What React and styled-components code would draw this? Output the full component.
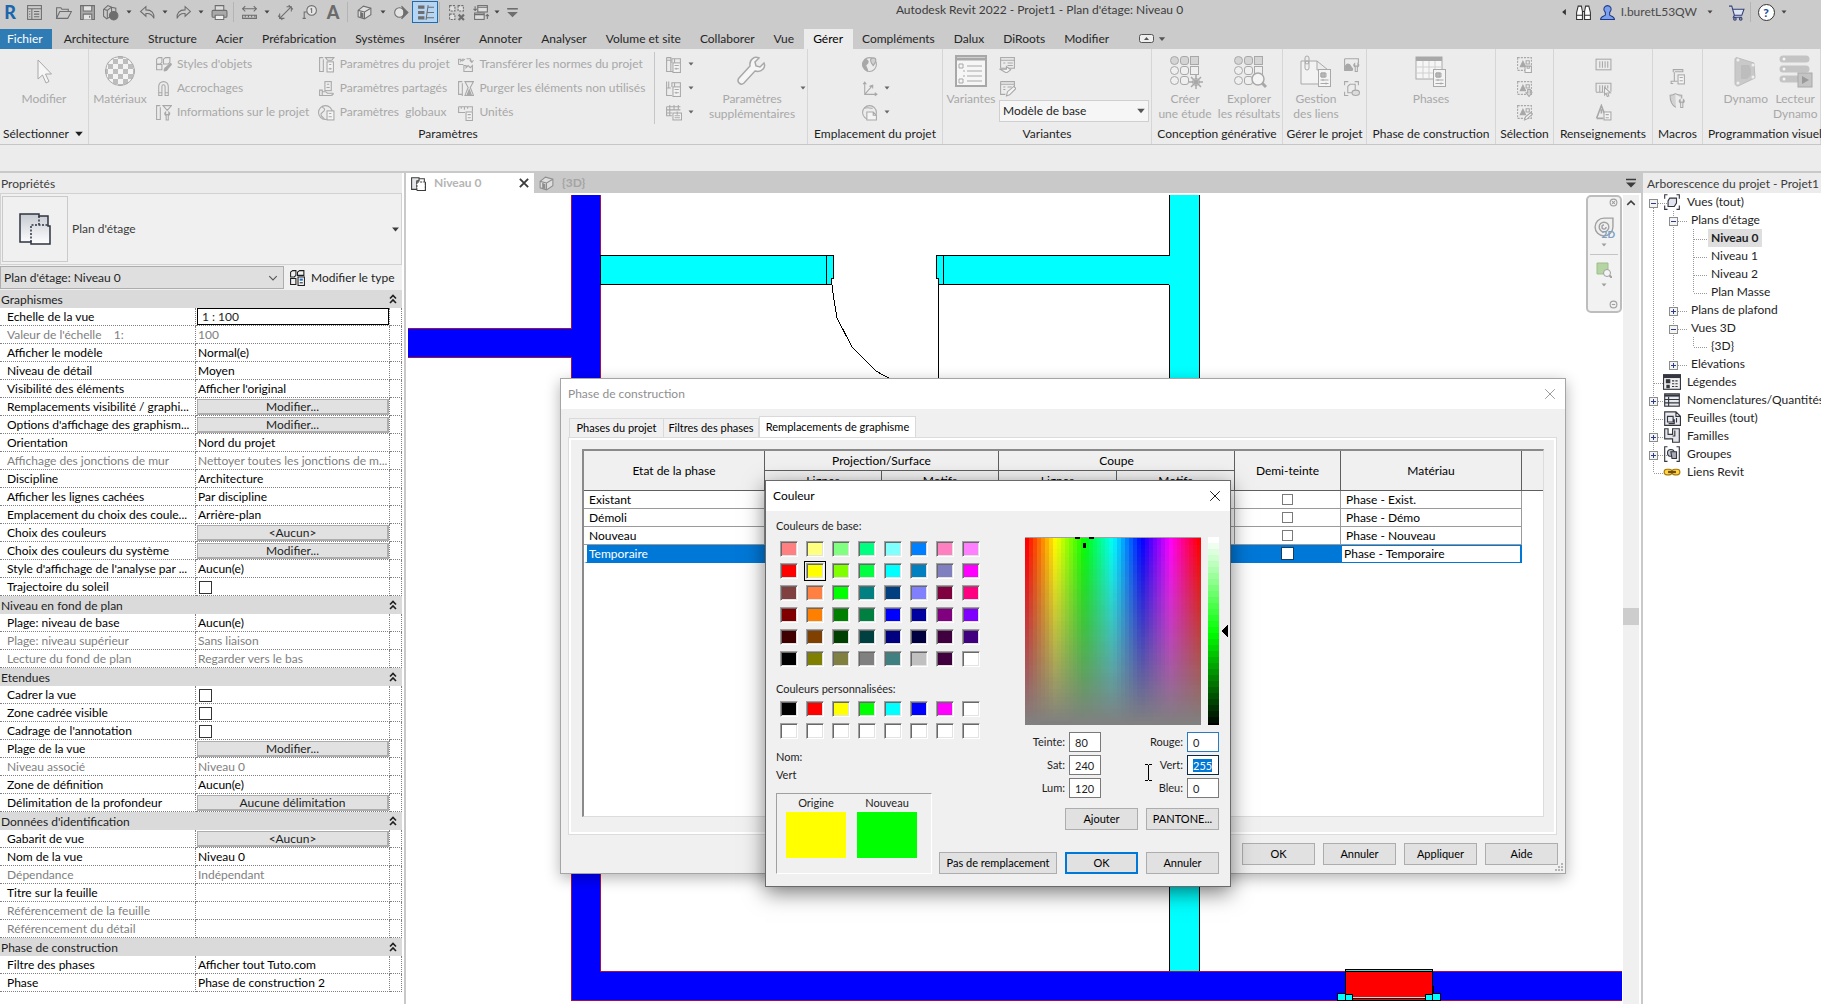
import React, { useEffect, useRef } from "react";
import styled, { createGlobalStyle, css } from "styled-components";

const GlobalStyle = createGlobalStyle`
  *, *::before, *::after { box-sizing: border-box; }
  body { margin: 0; background: #ececec; overflow: hidden; }
  body, button, input, select, table {
    font-family: Lato, "Open Sans", sans-serif;
    font-size: 12px;
    line-height: 16px;
    color: #1e1e1e;
  }
  ::selection { background: #0078d7; color: #fff; }
`;

/* ---------- icons ---------- */

const sheet = (
  <>
    <path d="M6.5 6.5V2.5h8v4M9 2.5v4" />
    <rect x="7.500" y="6.500" width="7" height="9" fill="#f4f4f4" />
    <path d="M9 9h4M9 12h4M10.500 11v2" />
  </>
);

const marquee = (
  <>
    <rect x="1.500" y="1.500" width="13" height="12" strokeDasharray="2 1" />
    <path d="M4 10l2.500-5L9 10z" fill="currentColor" />
    <path d="M9.500 4.500h3v3h-3z" />
  </>
);

const drawings = {
  list: <><rect x="1.500" y="1.500" width="13" height="13" /><path d="M1.500 4.500h13M5.500 4.500v10M7.500 7h5M7.500 9.500h5M7.500 12h5M3 7h1M3 9.500h1M3 12h1" /></>,
  open: <path d="M1.500 13.500v-10h4l1 1.500h6v2M1.500 13.500l3-6.500h11l-3.500 6.500z" />,
  save: <><path d="M1.500 1.500h13v13h-13z" fill="#a9a9a9" /><path d="M4 1.500h8v5H4zM4 14.500v-5h8v5M10 11v2" fill="#e4e4e4" /></>,
  sync: <><path d="M1.500 5l4-3.500L9 3v8l-4.500 3-3-2.500zM5 6v7M1.500 5L5 6l4-3M9 3l4 1v5" /><circle cx="11" cy="11" r="4" fill="currentColor" /></>,
  undo: <path d="M6.500 2.500l-5 4.500 5 4.500V9c4-.500 6 1 7.500 4.500.500-5-2-8-7.500-8z" />,
  redo: <path d="M9.500 2.500l5 4.500-5 4.500V9C5.500 8.500 3.500 10 2 13.500 1.500 8.500 4 5.500 9.500 5.500z" />,
  print: <><path d="M4 6V1.500h8V6" fill="#ddd" /><rect x="1" y="6" width="14" height="6.500" rx="1" fill="#a9a9a9" /><path d="M4 10.500h8v4H4z" fill="#eee" /></>,
  measure: <><path d="M1 4.500h14M4 2L1.500 4.500 4 7M12 2l2.500 2.500L12 7" /><path d="M1.500 10.500h13v3h-13zM4 10.500v2M7 10.500v2M10 10.500v2M13 10.500v2" /></>,
  dim: <path d="M2.500 13.500l11-11M9 2.500h4.500V7M2.500 9v4.500H7M1 11l4 4M11 1l4 4" />,
  tag: <><circle cx="10" cy="6" r="4.500" fill="#e4e4e4" /><path d="M5.500 7.500H3V13M10 4v4.500M9 5l1-1M1.500 13.500h3" /></>,
  house: <><path d="M2 6l5-4 7 2v6l-6 4-6-2z" fill="#dedede" /><path d="M2 6l6 1.500L14 4M8 7.500V14" /><path d="M4.500 8v4l2 .500V9z" fill="currentColor" /></>,
  section: <><circle cx="7" cy="8" r="4.500" fill="#e4e4e4" /><path d="M9 2l6 6-6 6c3-4 3-8 0-12z" fill="currentColor" /></>,
  thin: <><path d="M1 3h6M1 8h6M1 13h6" strokeWidth="3" /><path d="M10.500 1L8.500 15M10 3h6M10 8h6M9 13h7" /></>,
  hidden: <><path d="M1.500 1.500h5v5h-5zM9.500 1.500h5v5h-5zM1.500 9.500h5v5h-5z" strokeDasharray="2 1" fill="#e0e0e0" /><path d="M10 10l5 5M15 10l-5 5" strokeWidth="2" /></>,
  windows: <><rect x="4.500" y="1.500" width="9" height="6" fill="#dedede" /><rect x="1.500" y="8.500" width="9" height="6" fill="#dedede" /><path d="M4.500 3h9M1.500 10h9M2 2v4M13.500 10v4M.500 4.500L2 6l1.500-1.500M12 11.500l1.500-1.500 1.500 1.500" /></>,
  custom: <><path d="M3 4.500h10" strokeWidth="1.500" /><path d="M3 7.500h10L8 12.500z" fill="currentColor" stroke="none" /></>,
  objectStyles: <><path d="M1.500 3l2-1.500h3V6l-1.500 1.500H1.500zM8 3l2-1.500h4V6l-1.500 1.500H8zM1.500 8h5v5h-5z" /><path d="M9 14c-1 0 0-3 1.500-3.500L14.500 7c1 0 1 1 .500 1.500L12 12c-.500 1.500-1.500 2-3 2z" fill="currentColor" /></>,
  magnet: <><path d="M3.500 14.500V6a4.500 4.500 0 0 1 9 0v8.500h-3V6a1.500 1.500 0 0 0-3 0v8.500z" /><path d="M3.500 12h3M9.500 12h3" /></>,
  projectInfo: <><path d="M5 1.500H1.500v13H5M5 3v12M7.500 1.500h8L11.500 6z" /><path d="M10 7.500c-1.500 1-1 3 .500 3.500v4h2v-4c1.500-.500 2-2.500.500-3.500V10h-3z" /></>,
  projectParams: <><path d="M5 1.500H1.500v13H5M5 3v12M7 1.500h8L13 4H9z" /><rect x="8.500" y="5.500" width="6" height="9.500" fill="#f4f4f4" /><path d="M10.500 8h2M10 12h3M11.500 11v2" /></>,
  sharedParams: <><rect x="6.500" y="1.500" width="6" height="8.500" /><path d="M8.500 4h2M8 7h3M1.500 9.500H4v5H1.500zM4 11h3l2 1.500h5c1 0 0 2-2 2H4" /></>,
  globalParams: <><circle cx="7" cy="8" r="6.500" /><path d="M4 3c3 1 3 3 0 5s0 4 2 6" /><rect x="8.500" y="6.500" width="6.500" height="8.500" fill="#f4f4f4" /><path d="M10.500 9h2M10 12h3" /></>,
  transfer: <><path d="M1.500 8V3h2v2l2-2v1.500l2-1.500M9 2.500h3.500L14 6M12 4l2 2 1.500-2M6.500 14.500V9h2v2l2-2 2 2 2-2v5.500z" /><path d="M1.500 8H6" /></>,
  purge: <><path d="M5 1.500H1.500v12H5M5 3v12M7.500 1.500h8L12.500 7l3 7.500h-8L10.500 7z" /><path d="M11.500 9l2 5h-4z" fill="currentColor" /></>,
  units: <><path d="M1.500 2.500h13V7M1.500 2.500V8h6M4 2.500v2M7 2.500v3M10 2.500v2" /><rect x="8.500" y="7.500" width="6" height="8" fill="#f4f4f4" /><path d="M10 10h3M10 13h3" /></>,
  structural: <><path d="M1.500 1.500h4v13h5M1.500 4h4M1.500 1.500v13h4" />{sheet}</>,
  mep: <><path d="M1.500 1.500v13h5M1.500 7.500h4M3.500 1.500v6" />{sheet}</>,
  templates: <><path d="M1.500 2.500h13M1.500 2.500V11h5M1.500 5.500h13M4.500 1v10M8.500 1v5M12.500 1v5M1.500 8.500h5" /><rect x="7.500" y="8.500" width="8" height="6.500" fill="#f4f4f4" /><path d="M9 11h5M9 13h5M11.500 7v3" /></>,
  globe: <><circle cx="8" cy="8" r="6.500" /><path d="M4 3c4 1 3 4 1 5s2 4 1 6C3 12 1 9 1.500 7z" fill="currentColor" /><path d="M9 4c0-3 5-3 5 0 0 2-2.500 5-2.500 5S9 6 9 4z" fill="#d0d0d0" /></>,
  coords: <path d="M3.500 2v11.500H15M2 4l1.500-2L5 4M13 12l2 1.500-2 1.500M3.500 13.500l7-8M8 6l3-1v3" />,
  position: <><circle cx="8" cy="8" r="6.500" /><path d="M3 4c3-1 5 0 8 0" /><path d="M5.500 7.500h6l3 3v4.500h-9zM11.500 7.500v3h3" fill="#f4f4f4" /></>,
  optionPick: <><rect x="1.500" y="1.500" width="13" height="10" /><path d="M1.500 4h13M4 6.500h2M8 6.500h5M8 9h5" /><path d="M1 12.500h6V10l4 3-4 3z" fill="#f4f4f4" /></>,
  optionEdit: <><path d="M1.500 1.500h13V7M1.500 1.500v12H6M1.500 4h13M4 6.500h2M8 6.500h4M4 9h2" /><path d="M7 15l1-4 6-5 2 2-6 6z" fill="#f4f4f4" /></>,
  decal: <><path d="M1.500 2.500h13V7M1.500 2.500v11H9" /><path d="M2 12c0-4 2-5 4-4l3 4v1H2z" fill="currentColor" /><path d="M11 7c-1.500 1-1 3 .500 3.500v4h2v-4c1.500-.500 2-2.500.500-3.500v2.500h-3z" /></>,
  startView: <><path d="M1.500 5V1.500H5M11 1.500h3.500V5M1.500 11v3.500H5" /><path d="M4.500 6l2-2h5v6l-2 2h-5z" /><ellipse cx="12" cy="12" rx="3.500" ry="2.500" fill="#dcdcdc" /></>,
  selSave: <>{marquee}<path d="M8.500 9.500h6v6h-6z" fill="#f4f4f4" /><path d="M10.500 9.500v2h2v-2" /></>,
  selLoad: <>{marquee}<path d="M11 9h2.500v3H15l-2.700 3.500L9.500 12H11z" fill="#d8d8d8" /></>,
  selEdit: <>{marquee}<path d="M8 15l1-3 5-4 1.500 1.500-5 4.500z" fill="#f4f4f4" /></>,
  ids: <><rect x="1" y="3" width="14" height="10" /><path d="M4.500 5v6M7 5v6M9.500 5v6M12 5v6" /></>,
  idPick: <><path d="M1 11V3h14v8M4.500 5v6M7 5v6M9.500 5v4M12 5v3M1 11.500h7" /><path d="M9 7l5.500 5-2.500.300L13 15l-1.500.500-1-3L9 14z" fill="#f4f4f4" /></>,
  warnings: <><path d="M1.500 13.500L6 1.500l3 8M1.500 13.500H8M6 5v4" strokeWidth="1.500" /><rect x="8.500" y="7.500" width="6.500" height="7.500" fill="#f4f4f4" /><path d="M10 10h3M10 13h3" /></>,
  macros: <><path d="M4 4V1.500h9v2H5.500M5 4v8M4 14.500H2v-2h6" /><rect x="8.500" y="6.500" width="6" height="8.500" fill="#f4f4f4" /><path d="M10 9h3M10 12h3" /></>,
  security: <><path d="M6 1.500c2 1.500 4 1.500 6 1.500v3M6 1.500C4 3 2.500 3 1 3c0 5 1 9 5.500 11.500" fill="#d2d2d2" /><path d="M10.500 7c-1.500 1-1 3 .500 3.500v4h2v-4c1.500-.500 2-2.500.500-3.500v2.500h-3z" fill="#f4f4f4" /></>,
  typeEdit: <><path d="M1.500 3l2-1.500h3V6l-1.500 1.500H1.500zM8 3l2-1.500h4V6H8zM1.500 9h5v5.500h-5z" /><rect x="8.500" y="7.500" width="6" height="8" fill="#fff" /><path d="M10 10h3" stroke="#1f6fc0" strokeWidth="2" /><path d="M10 13h3" /></>,
  plan: <><path d="M1.500 2.500h7v3h-2v8h-5z" fill="#e4e6ea" /><path d="M8.500 3.500h5v3" /><path d="M6.500 6.500h8v8h-8z" fill="#fff" strokeDasharray="2 1" /><path d="M14.500 6.500v8h-8" /></>,
  view: <><path d="M4 1.500H1.500V5M12 1.500h2.500V5M1.500 11v3.500H4M14.500 11v3.500H12" /><path d="M4.500 7l1.500-2.500h6V9l-2 3H4.500z" fill="#e3e6ef" /></>,
  legend: <><rect x=".500" y="1.500" width="15" height="13" fill="#f0f0f0" /><path d="M.500 3h15" strokeWidth="3" /><path d="M3 6h3v2.500H3zM3.500 11h2v2h-2z" fill="currentColor" /><path d="M8 7h6M8 9.500h6M8 12h6" strokeDasharray="2 1" /></>,
  schedule: <><rect x="1.500" y="2.500" width="13" height="11" fill="#e8eaee" /><path d="M1.500 4h13" strokeWidth="2" /><path d="M1.500 7.500h13M1.500 10.500h13M5 5v8.500" /></>,
  sheets: <><path d="M1.500 2.500h10l4 4v8h-14zM11.500 2.500v4h4" fill="#e8eaee" /><path d="M4 6.500h5v5H4zM10 9v4H5M12 8v4" /></>,
  families: <><path d="M1.500 1.500h3v5h4v-5h6v12h-6v-3h-7z" fill="#e3e4e8" /><path d="M10.500 3v5h-2" /></>,
  groups: <><path d="M4 1.500H1.500v13H4M12 1.500h2.500v13H12" /><circle cx="7" cy="7" r="3" fill="#c9cbd2" /><path d="M7 6h5v6H8z" fill="#a9abb5" /></>,
  links: <g stroke="#a87600"><rect x="1" y="5.500" width="7" height="5" rx="2.500" fill="#ffd24a" /><rect x="8" y="5.500" width="7" height="5" rx="2.500" fill="#ffd24a" /><path d="M4.500 8h7" strokeWidth="2" stroke="#6f4e00" /></g>,
  search: <g fill="#fff" stroke="#333"><path d="M1.500 14.500V8l1.500-6h3l1 5v7.500zM9 14.500V7l1-5h3l1.500 6v6.500z" /><path d="M1.500 10.500H7M9 10.500h5.500M7 7h2" /></g>,
  user: <path d="M1.500 14.500c0-3 3-3 4.500-4V8C3 5 5 1.500 8 1.500S13 5 10 8v2.500c1.500 1 4.500 1 4.500 4z" fill="#7d9ff0" stroke="#1d3a83" />,
  cart: <><path d="M1 2h2.500L6 10.500h7L15 5H4.500M6 10.500l-1 2h8" stroke="#2f3f78" fill="#dfe4f2" /><circle cx="6.500" cy="14" r="1.200" stroke="#2f3f78" /><circle cx="12" cy="14" r="1.200" stroke="#2f3f78" /></>,
  close: <path d="M2.500 2.500l11 11M13.500 2.500l-11 11" />,
  closeTab: <path d="M2.500 2.500l11 11M13.500 2.500l-11 11" strokeWidth="2.500" />,
  wheel: <><path d="M8 1.500h6.500V8A6.500 6.500 0 1 1 8 1.500z" fill="#efefef" /><circle cx="8" cy="8" r="3.500" /><path d="M8 6.500a1.500 1.500 0 1 0 1.500 1.500" /></>,
  zoomRegion: <><path d="M1 1h11v11H1z" fill="#b5d3a3" stroke="#9cbf8b" /><circle cx="11" cy="11" r="3.500" fill="#f4f4f4" /><path d="M13.500 13.500L16 16" strokeWidth="2" /></>,
  minus: <><circle cx="8" cy="8" r="6" strokeWidth="2" /><path d="M5 8h6" strokeWidth="2" /></>,
  cross: <><circle cx="8" cy="8" r="6" strokeWidth="2" /><path d="M5.500 5.500l5 5M10.500 5.500l-5 5" strokeWidth="2" /></>,
  chevrons: <path d="M5 7.500L8 4.500l3 3M5 12l3-3 3 3" strokeWidth="1.600" />,
  down: <path d="M3 5.500l5 5 5-5" strokeWidth="1.500" />,
  up: <path d="M3 10.500l5-5 5 5" strokeWidth="2" />,
  caret: <path d="M3 5h10l-5 6z" fill="currentColor" stroke="none" />,
  back: <path d="M11 3v10L5 8z" fill="currentColor" stroke="none" />,
};

const Icon = ({ name, size = 16 }) => (
  <svg width={size} height={size} viewBox="0 0 16 16" fill="none" stroke="currentColor" strokeWidth="1" aria-hidden="true">
    {drawings[name]}
  </svg>
);

const checker = [];
for (let r = 0; r < 7; r++) {
  for (let c = 0; c < 7; c++) {
    if ((r + c) % 2) checker.push(<rect key={`${r}-${c}`} x={c * 5 - 1} y={r * 5 - 1} width="5" height="5" fill="#bdbdbd" />);
  }
}

const dots = (last) => (
  <>
    {[0, 1, 2].map((r) =>
      [0, 1, 2].map((c) =>
        r === 2 && c === 2 ? null : (
          <rect key={`${r}${c}`} x={1.5 + c * 10} y={1.5 + r * 10} width="8" height="8" rx={c === 2 ? 0 : 4 - c * 1.5} fill={r === 0 ? "#d4d4d4" : "#efefef"} />
        )
      )
    )}
    {last}
  </>
);

const page = (
  <>
    <rect x="18.500" y="14.500" width="12" height="17" fill="#f4f4f4" />
    <path d="M21 18h5v4h-5zM20.500 25h8M20.500 28.500h8M23 24v2M26 27.500v2" />
    <path d="M21 18h4v4h-4z" fill="#b8b8b8" />
  </>
);

const bigDrawings = {
  pointer: <path d="M10 5v19l4.500-4 3.500 8 3-1.500-3.500-7.500h6z" fill="#f6f6f6" />,
  materials: (
    <>
      <clipPath id="ball"><ellipse cx="16" cy="16" rx="15" ry="15" /></clipPath>
      <g clipPath="url(#ball)" stroke="none"><rect width="32" height="32" fill="#f3f3f3" />{checker}</g>
      <circle cx="16" cy="16" r="14.500" />
    </>
  ),
  wrench: <path d="M28 8l-4 4-4-1-1-4 4-4c-4-2-10 1-9 8L3 23c-3 4 2 8 5 5l11-12c7 2 11-4 9-8z" fill="#f6f6f6" strokeWidth="1.500" />,
  options: (
    <>
      <rect x="1" y="1" width="30" height="30" fill="#f6f6f6" strokeWidth="2" />
      <path d="M1 4h30" strokeWidth="3" />
      <path d="M4 9h4v4H4zM4 24h4v4H4zM12 11h15M12 16h15M12 21h15M12 26h15M8 16h2M8 21h2" />
    </>
  ),
  study: dots(<><circle cx="27" cy="27" r="3.500" /><path d="M27 20v14M20 27h14M22 22l10 10M32 22L22 32" strokeWidth="1.500" /></>),
  explore: dots(<><circle cx="25" cy="24" r="6" fill="#f4f4f4" strokeWidth="1.500" /><path d="M29 28l4 4" strokeWidth="3" /></>),
  links: <><path d="M1 6h16l11 9v14H1zM17 6v9h11" fill="#f2f2f2" /><rect x="5" y="1" width="4" height="8" rx="2" /><rect x="5" y="6" width="4" height="9" rx="2" />{page}</>,
  phases: <><rect x="1" y="2" width="26" height="22" fill="#f6f6f6" /><path d="M1 4h26" strokeWidth="4" /><path d="M1 12h26M1 18h26M8 6v18M14 6v18M20 6v18" stroke="#d0d0d0" />{page}</>,
  dynamo: (
    <>
      <path d="M8 3l16 5 1 15-17 8c-2 0-3-1-3-3V5c0-2 1-3 3-2z" fill="#c9c9c9" stroke="#bdbdbd" />
      <path d="M11 10h8l2 4v6l-4 4h-6z" fill="#bdbdbd" stroke="none" />
      <g fill="#efefef" stroke="none"><circle cx="8" cy="5" r="1.500" /><circle cx="23" cy="10" r="1.500" /><circle cx="23" cy="22" r="1.500" /><circle cx="8" cy="28" r="1.500" /></g>
    </>
  ),
  player: (
    <>
      <path d="M4 4h23M4 14h23M4 24h14" strokeWidth="7" strokeLinecap="round" stroke="#c4c4c4" />
      <g fill="#f4f4f4" stroke="none"><circle cx="5" cy="4" r="1.500" /><circle cx="5" cy="14" r="1.500" /><circle cx="5" cy="24" r="1.500" /></g>
      <rect x="19" y="18" width="14" height="14" fill="#c4c4c4" />
      <path d="M23 21v8l7-4z" fill="#9a9a9a" stroke="none" />
    </>
  ),
};

const BigIcon = ({ name }) => (
  <svg width="32" height="32" viewBox="0 0 32 32" fill="none" stroke="currentColor" overflow="visible" aria-hidden="true">
    {bigDrawings[name]}
  </svg>
);

/* ---------- frame ---------- */

const Shell = styled.div`
  display: flex;
  flex-direction: column;
  height: 100vh;
  overflow: hidden;
  white-space: nowrap;
`;

const TitleBar = styled.header`
  display: grid;
  grid-template-columns: 1fr auto 1fr;
  height: 29px;
  background: #cbcbcb;
  svg { display: block; }
`;

const TitleGroup = styled.div`
  display: flex;
  align-items: center;
  justify-content: ${(p) => (p.$end ? "flex-end" : "flex-start")};
  height: 24px;
  padding-right: ${(p) => (p.$end ? 32 : 0)}px;
  color: #6e6e6e;
`;

const UserName = styled.span`
  color: #4a4a4a;
`;

const WindowTitle = styled.h1`
  margin: 0;
  padding-left: 258px;
  font-size: 12px;
  font-weight: 400;
  line-height: 20px;
  color: #3c3c3c;
`;

const Tool = styled.button`
  display: flex;
  align-items: center;
  justify-content: center;
  flex: none;
  width: ${(p) => p.$w || 26}px;
  height: 22px;
  padding: 0;
  color: ${(p) => p.$color || "inherit"};
  font-size: ${(p) => (p.$big ? 18 : 12)}px;
  font-weight: ${(p) => (p.$big ? 900 : 400)};
  line-height: 22px;
  background: ${(p) => (p.$on ? "#b5d5f2" : "none")};
  border: ${(p) => (p.$on ? "1px solid #1c6cb4" : 0)};
`;

const Bar = styled.span`
  flex: none;
  width: 1px;
  height: 20px;
  margin: 0 2px 0 1px;
  background: #b4b4b4;
`;

const Help = styled.span`
  width: 17px;
  height: 17px;
  border: 1px solid #333;
  border-radius: 50%;
  background: #fff;
  color: #1c4fa0;
  font-weight: 900;
  line-height: 15px;
  text-align: center;
`;

const TabStrip = styled.nav`
  display: flex;
  height: 20px;
  background: #cbcbcb;
`;

const Tab = styled.a`
  padding: 0 10px 0 9px;
  line-height: 20px;
  text-decoration: none;
  color: #262626;
  ${(p) => p.$file && css`padding: 0 9px 0 7px; margin-right: 3px; background: #2f7bb3; color: #fff;`}
  ${(p) => p.$active && css`background: #ececec; color: #000;`}
`;

const MinimizeRibbon = styled.button`
  display: flex;
  align-items: center;
  gap: 2px;
  margin-left: 20px;
  padding: 0;
  border: 0;
  background: none;
  color: #555;
`;

/* ---------- ribbon ---------- */

const RibbonBar = styled.div`
  display: flex;
  height: 96px;
  background: #ececec;
  border-bottom: 1px solid #c6c6c6;
  svg { flex: none; }
`;

const Panel = styled.section`
  display: flex;
  flex-direction: column;
  flex: ${(p) => (p.$w ? `0 0 ${p.$w}px` : "1 0 118px")};
  min-width: 0;
  padding-top: 3px;
  border-right: 1px solid #d6d6d6;
`;

const PanelBody = styled.div`
  display: flex;
  flex: 1;
  justify-content: ${(p) => p.$justify || "center"};
  padding-left: ${(p) => p.$pad || 0}px;
  color: #a8a8a8;
`;

const PanelTitle = styled.div`
  display: flex;
  align-items: center;
  justify-content: ${(p) => (p.$start ? "flex-start" : "center")};
  gap: 4px;
  height: 20px;
  padding-left: ${(p) => (p.$start ? 5 : 0)}px;
  line-height: 20px;
`;

const Stack = styled.div`
  display: flex;
  flex-direction: column;
  justify-content: ${(p) => (p.$middle ? "center" : "flex-start")};
  width: ${(p) => (p.$w ? `${p.$w}px` : "auto")};
  padding-left: ${(p) => p.$pad || 0}px;
`;

const SmallCommand = styled.button`
  display: flex;
  align-items: center;
  gap: 5px;
  height: 24px;
  padding: 0;
  border: 0;
  background: none;
  color: #a8a8a8;
  white-space: pre;
`;

const Caret = styled.span`
  display: flex;
  color: #666;
`;

const BigCommand = styled.button`
  display: flex;
  flex-direction: column;
  align-items: center;
  width: ${(p) => p.$w || 64}px;
  padding: 3px 0 0;
  border: 0;
  background: none;
  color: #a8a8a8;
  line-height: 15px;
  svg { margin-bottom: 4px; }
`;

const Divider = styled.span`
  width: 1px;
  height: 72px;
  background: #c6c6c6;
`;

const Combo = styled.div`
  display: grid;
  grid-template-columns: 1fr ${(p) => (p.$wide ? 20 : 14)}px;
  align-items: center;
  width: ${(p) => p.$w}px;
  height: ${(p) => p.$h || 22}px;
  border: 1px solid ${(p) => p.$line || "#cfcfcf"};
  background: ${(p) => p.$fill || "#f6f6f6"};
  color: #555;
  select {
    grid-area: 1 / 1 / 2 / 3;
    height: 100%;
    padding: 0 3px;
    border: 0;
    background: none;
    appearance: none;
  }
  svg { grid-area: 1 / 2 / 2 / 3; justify-self: center; pointer-events: none; }
`;

const OptionsBar = styled.div`
  height: 28px;
  background: #ececec;
  border-bottom: 2px solid #c9c9c9;
`;

/* ---------- properties ---------- */

const Workspace = styled.div`
  display: flex;
  flex: 1;
  min-height: 0;
`;

const Properties = styled.aside`
  flex: none;
  width: 406px;
  padding-right: 2px;
  background: #fff;
  border-right: 2px solid #c9c9c9;
`;

const PaneTitle = styled.h2`
  height: 20px;
  margin: 0;
  padding-left: ${(p) => p.$pad || 1}px;
  background: #ececec;
  font-size: 12px;
  font-weight: 400;
  line-height: 22px;
  color: #3c3c3c;
`;

const TypeSelector = styled.div`
  display: flex;
  align-items: center;
  gap: 4px;
  height: 72px;
  padding: 2px 0 2px 1px;
  background: #f0f0f0;
  border: 1px solid #d2d2d2;
  color: #3c3c3c;
  span { flex: 1; }
`;

const Preview = styled.div`
  display: grid;
  place-items: center;
  width: 66px;
  height: 66px;
  border: 1px solid #cacaca;
`;

const InstanceRow = styled.div`
  display: flex;
  align-items: center;
  gap: 5px;
  height: 25px;
  background: #f0f0f0;
`;

const FlatButton = styled.button`
  display: flex;
  align-items: center;
  gap: 5px;
  padding: 0;
  border: 0;
  background: none;
`;

const PropTable = styled.table`
  width: 100%;
  table-layout: fixed;
  border-collapse: separate;
  border-spacing: 0;
  th, td {
    height: 18px;
    padding: 0;
    font-weight: 400;
    line-height: 17px;
    text-align: left;
    overflow: hidden;
  }
`;

const GroupHead = styled.th`
  padding-left: 1px !important;
  background: #dadada;
  div { display: flex; justify-content: space-between; align-items: center; padding-right: 1px; }
`;

const NameCell = styled.th`
  padding-left: 7px !important;
  color: ${(p) => (p.$off ? "#808080" : "#000")};
  white-space: pre;
  border-bottom: 1px dotted #808080;
  border-right: 1px dotted #808080;
`;

const ValueCell = styled.td`
  padding-left: ${(p) => (p.$plain ? 2 : 1)}px !important;
  color: ${(p) => (p.$off ? "#808080" : "#000")};
  border-bottom: 1px dotted #808080;
  border-right: 1px dotted #808080;
`;

const ValueButton = styled.button`
  display: block;
  width: 100%;
  height: 16px;
  padding: 0;
  background: #e1e1e1;
  border: 1px solid #adadad;
  border-width: 1px 2px 2px 1px;
  line-height: 13px;
`;

const ScaleInput = styled.input`
  display: block;
  width: 100%;
  height: 17px;
  padding: 0 4px;
  border: 1px solid #000;
  background: #fff;
`;

const Check = styled.input`
  display: block;
  width: ${(p) => p.$size || 13}px;
  height: ${(p) => p.$size || 13}px;
  margin: ${(p) => p.$margin || "2px 0 0 2px"};
  appearance: none;
  background: #fff;
  border: 1px solid ${(p) => p.$line || "#333"};
`;

/* ---------- view area ---------- */

const ViewArea = styled.main`
  display: flex;
  flex-direction: column;
  flex: 1;
  min-width: 0;
`;

const ViewTabs = styled.div`
  display: flex;
  align-items: center;
  justify-content: space-between;
  flex: none;
  height: 20px;
  padding-right: 2px;
  background: #c9c9c9;
  color: #3c3c3c;
`;

const TabGroup = styled.div`
  display: flex;
`;

const ViewTab = styled.div`
  display: flex;
  align-items: center;
  gap: 7px;
  width: ${(p) => (p.$active ? 128 : 60)}px;
  height: 20px;
  padding: 0 4px;
  background: ${(p) => (p.$active ? "#fff" : "none")};
  color: ${(p) => (p.$active ? "#3c3c3c" : "#8e8e8e")};
  b { flex: 1; color: ${(p) => (p.$active ? "#b5b5b5" : "#a4a4a4")}; }
`;

const ViewBody = styled.div`
  display: flex;
  flex: 1;
  min-height: 0;
`;

const Canvas = styled.div`
  position: relative;
  flex: 1;
  min-width: 0;
  background: #fff;
  > svg { display: block; width: 100%; height: 100%; }
`;

const ScrollTrack = styled.div`
  display: flex;
  flex-direction: column;
  align-items: center;
  flex: none;
  width: 18px;
  padding-top: 2px;
  background: #f0f0f0;
  border: solid #fff;
  border-width: 2px 2px 0 0;
  color: #404040;
`;

const ScrollSpace = styled.span`
  flex: 0 0 399px;
`;

const ScrollThumb = styled.span`
  width: 100%;
  height: 17px;
  background: #cdcdcd;
`;

const NavBar = styled.div`
  position: absolute;
  top: 2px;
  right: 1px;
  display: flex;
  flex-direction: column;
  align-items: center;
  width: 36px;
  height: 118px;
  background: #f2f2f2;
  border: 2px solid #bdbdbd;
  border-radius: 5px;
  color: #a0a0a0;
`;

const NavEnd = styled.span`
  align-self: flex-end;
  height: 12px;
  padding: 1px 2px 0 0;
  svg { display: block; }
`;

const NavItem = styled.button`
  display: flex;
  flex-direction: column;
  align-items: center;
  gap: 3px;
  width: 28px;
  height: ${(p) => p.$h}px;
  padding: 7px 0 0;
  border: 0;
  border-bottom: ${(p) => (p.$line ? "1px solid #c4c4c4" : 0)};
  background: none;
  color: #a0a0a0;
`;

const WheelMark = styled.span`
  display: grid;
  b { grid-area: 1 / 1; place-self: end; font-size: 10px; line-height: 8px; color: #7ba0c8; }
  svg { grid-area: 1 / 1; }
`;

/* ---------- dialogs ---------- */

const Dialog = styled.div`
  position: absolute;
  display: flex;
  flex-direction: column;
  background: #f0f0f0;
  font-size: 12px;
`;

const PhaseWindow = styled(Dialog)`
  top: 185px;
  left: 154px;
  width: 1006px;
  height: 496px;
  border: 1px solid #a5a5a5;
  box-shadow: 0 4px 14px rgba(0, 0, 0, 0.3);
`;

const ColorWindow = styled(Dialog)`
  top: 287px;
  left: 359px;
  width: 466px;
  height: 407px;
  border: 1px solid #6a6a6a;
  box-shadow: 0 6px 20px rgba(0, 0, 0, 0.5);
  font-size: 11px;
  button, input { font-size: 11px; }
`;

const DialogTitle = styled.div`
  display: flex;
  align-items: center;
  justify-content: space-between;
  flex: none;
  height: 30px;
  padding: 0 8px 0 7px;
  background: #fff;
  font-size: 12px;
  color: ${(p) => (p.$idle ? "#8f8f8f" : "#000")};
  button { display: flex; padding: 0; border: 0; background: none; color: inherit; }
`;

const DialogTabs = styled.div`
  display: flex;
  align-items: flex-end;
  height: 28px;
  padding-left: 8px;
`;

const DialogTab = styled.button`
  height: ${(p) => (p.$active ? 21 : 19)}px;
  width: ${(p) => (p.$active ? 157 : 95)}px;
  padding: 0;
  border: 1px solid #d9d9d9;
  border-bottom: 0;
  border-left-width: ${(p) => (p.$joined ? 0 : 1)}px;
  background: ${(p) => (p.$active ? "#fff" : "#f0f0f0")};
  color: #000;
  font-size: 11px;
`;

const TabPane = styled.div`
  flex: 1;
  margin: 0 8px 0 7px;
  padding: 11px 12px 17px 13px;
  border: 1px solid #dcdcdc;
  box-shadow: inset 0 0 0 2px #fff;
`;

const GridBox = styled.div`
  height: 100%;
  background: #fff;
  border: 1px solid #dcdcdc;
  border-top: 2px solid #8a8a8a;
  border-left: 2px solid #8a8a8a;
`;

const PhaseTable = styled.table`
  width: 100%;
  table-layout: fixed;
  border-collapse: separate;
  border-spacing: 0;
  color: #000;
  th {
    height: 20px;
    padding: 0;
    background: #f0f0f0;
    border: solid #5f5f5f;
    border-width: 0 1px 1px 0;
    font-weight: 400;
    line-height: 18px;
  }
  th:last-child[rowspan] { border-right: 0; }
  td {
    height: 18px;
    padding: 0 5px;
    border: solid #9a9a9a;
    border-width: 0 1px 1px 0;
    line-height: 17px;
  }
  td:last-child { border: 0; background: #fff; }
`;

const PhaseRow = styled.tr`
  ${(p) => p.$selected && css`
    td { background: #0078d7; border-color: #0078d7; color: #fff; }
    td:first-child { border-left: 3px solid #fff; padding-left: 2px; }
    td:nth-child(7) { background: #fff; color: #000; border-width: 1px 2px 1px 1px; padding-left: 2px; line-height: 16px; }
  `}
`;

const DialogFooter = styled.div`
  display: flex;
  justify-content: flex-end;
  gap: 8px;
  padding: 8px 7px 8px;
`;

const PushButton = styled.button`
  width: ${(p) => p.$w || 73}px;
  height: 22px;
  padding: 0;
  background: #e1e1e1;
  border: ${(p) => (p.$primary ? "2px solid #0078d7" : "1px solid #adadad")};
  color: #000;
  font-size: 11px;
`;

const ColorBody = styled.div`
  display: flex;
  flex: 1;
  justify-content: space-between;
  padding: 6px 11px 12px 10px;
`;

const ColorColumn = styled.div`
  display: flex;
  flex-direction: column;
  width: 216px;
`;

const Caption = styled.div`
  height: ${(p) => p.$h || 18}px;
  line-height: 18px;
`;

const SwatchGrid = styled.div`
  display: grid;
  grid-template-columns: repeat(8, 18px);
  gap: 6px 8px;
  margin-bottom: ${(p) => p.$after}px;
  padding-left: 4px;
`;

const Swatch = styled.button`
  height: 16px;
  padding: 0;
  border: 1px solid;
  border-color: #a0a0a0 #fff #fff #a0a0a0;
  box-shadow: inset 1px 1px 0 #696969, inset -1px -1px 0 #e3e3e3;
  outline: ${(p) => (p.$picked ? "1px solid #000" : "0")};
  outline-offset: 1px;
  background: ${(p) => p.$color};
`;

const Comparison = styled.div`
  display: flex;
  gap: 11px;
  width: 156px;
  height: 81px;
  margin-top: auto;
  padding: 0 9px;
  border: 1px solid;
  border-color: #a0a0a0 #fff #fff #a0a0a0;
  text-align: center;
`;

const Sample = styled.div`
  width: 60px;
  &::after { content: ""; display: block; height: 46px; background: ${(p) => p.$color}; }
`;

const RightColumn = styled.div`
  display: flex;
  flex-direction: column;
  align-items: flex-end;
  flex: none;
  padding-top: 20px;
  margin-left: -64px;
`;

const Pickers = styled.div`
  display: flex;
  gap: 7px;
  height: 188px;
  svg { display: block; overflow: visible; }
`;

const Fields = styled.div`
  display: grid;
  grid-template-columns: auto 32px auto 32px;
  column-gap: 4px;
  row-gap: 3px;
  margin: 7px 0 10px;
`;

const FieldLabel = styled.label`
  width: ${(p) => p.$w || 50}px;
  line-height: 20px;
  text-align: right;
`;

const NumberBox = styled.input`
  width: 32px;
  height: 20px;
  padding: 0 5px;
  border: 1px solid ${(p) => p.$line || "#7a7a7a"};
  background: #fff;
  outline: 0;
`;

const ButtonLine = styled.div`
  display: flex;
  gap: 8px;
  margin-top: ${(p) => (p.$bottom ? "auto" : 0)};
`;

const IBeam = styled.svg`
  position: absolute;
  left: 378px;
  top: 283px;
`;

/* ---------- project browser ---------- */

const Browser = styled.aside`
  flex: none;
  width: 180px;
  overflow: hidden;
  background: #fff;
  border-left: 2px solid #c9c9c9;
`;

const Tree = styled.ul`
  margin: 0;
  padding: 0;
  list-style: none;
`;

const TreeRow = styled.li`
  display: flex;
  align-items: center;
  height: 18px;
  color: #33363f;
  svg { flex: none; overflow: visible; }
`;

const TreeLabel = styled.a`
  margin-left: ${(p) => (p.$root ? 3 : 5)}px;
  padding: 0 3px;
  line-height: 18px;
  text-decoration: none;
  color: #1e1e1e;
  font-weight: ${(p) => (p.$current ? 700 : 400)};
  background: ${(p) => (p.$current ? "#dedede" : "none")};
`;

/* ---------- data ---------- */

const quickTools = [
  { text: "R", w: 20, big: true, color: "#1c66ad" },
  { icon: "list", w: 28 }, { icon: "open", w: 30 }, { icon: "save", w: 18 },
  { icon: "sync", w: 28 }, { icon: "caret", w: 10 }, { icon: "undo" }, { icon: "caret", w: 10 },
  { icon: "redo" }, { icon: "caret", w: 10 }, { icon: "print" }, { bar: true },
  { icon: "measure" }, { icon: "caret", w: 10 }, { icon: "dim" }, { icon: "tag", w: 22 },
  { text: "A", big: true, color: "#6b6b6b" }, { bar: true },
  { icon: "house", w: 28 }, { icon: "caret", w: 10 }, { icon: "section", w: 24 },
  { icon: "thin", on: true }, { bar: true },
  { icon: "hidden", w: 28 }, { icon: "windows", w: 22 }, { icon: "caret", w: 10 }, { icon: "custom", w: 20 },
];

const ribbonTabs = [
  "Fichier", "Architecture", "Structure", "Acier", "Préfabrication", "Systèmes", "Insérer", "Annoter", "Analyser",
  "Volume et site", "Collaborer", "Vue", "Gérer", "Compléments", "Dalux", "DiRoots", "Modifier",
];

const paramColumns = [
  { w: 163, items: [["objectStyles", "Styles d'objets"], ["magnet", "Accrochages"], ["projectInfo", "Informations sur le projet"]] },
  { w: 140, items: [["projectParams", "Paramètres du projet"], ["sharedParams", "Paramètres partagés"], ["globalParams", "Paramètres  globaux"]] },
  { w: 197, items: [["transfer", "Transférer les normes du projet"], ["purge", "Purger les éléments non utilisés"], ["units", "Unités"]] },
];

const propertyGroups = [
  {
    title: "Graphismes",
    rows: [
      { name: "Echelle de la vue", kind: "input", value: "1 : 100" },
      { name: "Valeur de l'échelle    1:", value: "100", off: true },
      { name: "Afficher le modèle", value: "Normal(e)" },
      { name: "Niveau de détail", value: "Moyen" },
      { name: "Visibilité des éléments", value: "Afficher l'original" },
      { name: "Remplacements visibilité / graphi...", kind: "button", value: "Modifier..." },
      { name: "Options d'affichage des graphism...", kind: "button", value: "Modifier..." },
      { name: "Orientation", value: "Nord du projet" },
      { name: "Affichage des jonctions de mur", value: "Nettoyer toutes les jonctions de m...", off: true },
      { name: "Discipline", value: "Architecture" },
      { name: "Afficher les lignes cachées", value: "Par discipline" },
      { name: "Emplacement du choix des coule...", value: "Arrière-plan" },
      { name: "Choix des couleurs", kind: "button", value: "<Aucun>" },
      { name: "Choix des couleurs du système", kind: "button", value: "Modifier..." },
      { name: "Style d'affichage de l'analyse par ...", value: "Aucun(e)" },
      { name: "Trajectoire du soleil", kind: "check" },
    ],
  },
  {
    title: "Niveau en fond de plan",
    rows: [
      { name: "Plage: niveau de base", value: "Aucun(e)" },
      { name: "Plage: niveau supérieur", value: "Sans liaison", off: true },
      { name: "Lecture du fond de plan", value: "Regarder vers le bas", off: true },
    ],
  },
  {
    title: "Etendues",
    rows: [
      { name: "Cadrer la vue", kind: "check" },
      { name: "Zone cadrée visible", kind: "check" },
      { name: "Cadrage de l'annotation", kind: "check" },
      { name: "Plage de la vue", kind: "button", value: "Modifier..." },
      { name: "Niveau associé", value: "Niveau 0", off: true },
      { name: "Zone de définition", value: "Aucun(e)" },
      { name: "Délimitation de la profondeur", kind: "button", value: "Aucune délimitation" },
    ],
  },
  {
    title: "Données d'identification",
    rows: [
      { name: "Gabarit de vue", kind: "button", value: "<Aucun>" },
      { name: "Nom de la vue", value: "Niveau 0" },
      { name: "Dépendance", value: "Indépendant", off: true },
      { name: "Titre sur la feuille", value: "" },
      { name: "Référencement de la feuille", value: "", off: true },
      { name: "Référencement du détail", value: "", off: true },
    ],
  },
  {
    title: "Phase de construction",
    rows: [
      { name: "Filtre des phases", value: "Afficher tout Tuto.com" },
      { name: "Phase", value: "Phase de construction 2" },
    ],
  },
];

// guides: one entry per 20px column. v = line through, t = branch, l = last branch, + and - = branch with a box
const treeRows = [
  { guides: ["-first"], icon: "view", label: "Vues (tout)" },
  { guides: ["v", "-"], label: "Plans d'étage" },
  { guides: ["v", "v", "t"], label: "Niveau 0", current: true },
  { guides: ["v", "v", "t"], label: "Niveau 1" },
  { guides: ["v", "v", "t"], label: "Niveau 2" },
  { guides: ["v", "v", "l"], label: "Plan Masse" },
  { guides: ["v", "+"], label: "Plans de plafond" },
  { guides: ["v", "-"], label: "Vues 3D" },
  { guides: ["v", "v", "l"], label: "{3D}" },
  { guides: ["v", "+last"], label: "Elévations" },
  { guides: ["t"], icon: "legend", label: "Légendes" },
  { guides: ["+"], icon: "schedule", label: "Nomenclatures/Quantités" },
  { guides: ["t"], icon: "sheets", label: "Feuilles (tout)" },
  { guides: ["+"], icon: "families", label: "Familles" },
  { guides: ["+"], icon: "groups", label: "Groupes" },
  { guides: ["l"], icon: "links", label: "Liens Revit" },
];

const baseColors = [
  "#ff8080", "#ffff80", "#80ff80", "#00ff80", "#80ffff", "#0080ff", "#ff80c0", "#ff80ff",
  "#ff0000", "#ffff00", "#80ff00", "#00ff40", "#00ffff", "#0080c0", "#8080c0", "#ff00ff",
  "#804040", "#ff8040", "#00ff00", "#008080", "#004080", "#8080ff", "#800040", "#ff0080",
  "#800000", "#ff8000", "#008000", "#008040", "#0000ff", "#0000a0", "#800080", "#8000ff",
  "#400000", "#804000", "#004000", "#004040", "#000080", "#000040", "#400040", "#400080",
  "#000000", "#808000", "#808040", "#808080", "#408080", "#c0c0c0", "#400040", "#ffffff",
];

const customColors = ["#000000", "#ff0000", "#ffff00", "#00ff00", "#00ffff", "#0000ff", "#ff00ff"].concat(Array(9).fill("#ffffff"));

const phases = [
  ["Existant", "Phase - Exist."],
  ["Démoli", "Phase - Démo"],
  ["Nouveau", "Phase - Nouveau"],
  ["Temporaire", "Phase - Temporaire"],
];

/* ---------- parts ---------- */

const Header = () => (
  <TitleBar>
    <TitleGroup>
      {quickTools.map((t, i) =>
        t.bar ? <Bar key={i} /> : (
          <Tool key={i} $w={t.w} $on={t.on} $big={t.big} $color={t.color || (t.icon === "caret" ? "#444" : undefined)}>
            {t.text || <Icon name={t.icon} size={t.icon === "caret" ? 8 : 17} />}
          </Tool>
        )
      )}
    </TitleGroup>
    <WindowTitle>Autodesk Revit 2022 - Projet1 - Plan d'étage: Niveau 0</WindowTitle>
    <TitleGroup $end>
      <Tool $w={18} $color="#333"><Icon name="back" size={10} /></Tool>
      <Tool $w={22}><Icon name="search" size={17} /></Tool>
      <Tool><Icon name="user" size={17} /></Tool>
      <UserName>I.buretL53QW</UserName>
      <Tool $color="#444"><Icon name="caret" size={8} /></Tool>
      <Tool><Icon name="cart" size={17} /></Tool>
      <Bar />
      <Tool><Help>?</Help></Tool>
      <Tool $w={10} $color="#444"><Icon name="caret" size={8} /></Tool>
    </TitleGroup>
  </TitleBar>
);

const DropDown = ({ icon }) => (
  <SmallCommand><Icon name={icon} size={17} /><Caret><Icon name="caret" size={8} /></Caret></SmallCommand>
);

const Ribbon = () => (
  <>
    <TabStrip>
      {ribbonTabs.map((t) => (
        <Tab key={t} href="#" $file={t === "Fichier"} $active={t === "Gérer"}>{t}</Tab>
      ))}
      <MinimizeRibbon>
        <svg width="16" height="10" viewBox="0 0 16 10" fill="#eee" stroke="#555">
          <rect x=".5" y=".5" width="14" height="8" rx="2" />
          <path d="M5 6l2.500-3L10 6z" fill="#555" stroke="none" />
        </svg>
        <Icon name="caret" size={10} />
      </MinimizeRibbon>
    </TabStrip>
    <RibbonBar>
      <Panel $w={89}>
        <PanelBody><BigCommand $w={86}><BigIcon name="pointer" />Modifier</BigCommand></PanelBody>
        <PanelTitle>Sélectionner <Icon name="caret" size={12} /></PanelTitle>
      </Panel>
      <Panel $w={719}>
        <PanelBody $justify="flex-start">
          <BigCommand $w={62}><BigIcon name="materials" />Matériaux</BigCommand>
          {paramColumns.map((col, i) => (
            <Stack key={col.w} $w={i === 0 ? col.w + 4 : col.w} $pad={i === 0 ? 4 : 0}>
              {col.items.map(([icon, label]) => <SmallCommand key={icon}><Icon name={icon} size={17} />{label}</SmallCommand>)}
            </Stack>
          ))}
          <Divider />
          <Stack $w={50} $pad={10}>
            {["structural", "mep", "templates"].map((icon) => <DropDown key={icon} icon={icon} />)}
          </Stack>
          <BigCommand $w={94}><BigIcon name="wrench" />Paramètres<span>supplémentaires</span></BigCommand>
          <Stack $middle><Caret><Icon name="caret" size={8} /></Caret></Stack>
        </PanelBody>
        <PanelTitle>Paramètres</PanelTitle>
      </Panel>
      <Panel $w={135}>
        <PanelBody>
          <Stack $w={28}>
            <SmallCommand><Icon name="globe" size={17} /></SmallCommand>
            <DropDown icon="coords" />
            <DropDown icon="position" />
          </Stack>
        </PanelBody>
        <PanelTitle>Emplacement du projet</PanelTitle>
      </Panel>
      <Panel $w={209}>
        <PanelBody $justify="flex-start" $pad={1}>
          <BigCommand $w={54}><BigIcon name="options" />Variantes</BigCommand>
          <Stack $pad={1}>
            <SmallCommand><Icon name="optionPick" size={17} /></SmallCommand>
            <SmallCommand><Icon name="optionEdit" size={17} /></SmallCommand>
            <Combo $w={150}>
              <select defaultValue="base"><option value="base">Modèle de base</option></select>
              <Icon name="caret" size={12} />
            </Combo>
          </Stack>
        </PanelBody>
        <PanelTitle>Variantes</PanelTitle>
      </Panel>
      <Panel $w={131}>
        <PanelBody>
          <BigCommand><BigIcon name="study" />Créer<span>une étude</span></BigCommand>
          <BigCommand><BigIcon name="explore" />Explorer<span>les résultats</span></BigCommand>
        </PanelBody>
        <PanelTitle>Conception générative</PanelTitle>
      </Panel>
      <Panel $w={84}>
        <PanelBody>
          <BigCommand $w={54}><BigIcon name="links" />Gestion<span>des liens</span></BigCommand>
          <Stack>
            <SmallCommand><Icon name="decal" size={17} /></SmallCommand>
            <SmallCommand><Icon name="startView" size={17} /></SmallCommand>
          </Stack>
        </PanelBody>
        <PanelTitle>Gérer le projet</PanelTitle>
      </Panel>
      <Panel $w={129}>
        <PanelBody><BigCommand><BigIcon name="phases" />Phases</BigCommand></PanelBody>
        <PanelTitle>Phase de construction</PanelTitle>
      </Panel>
      <Panel $w={58}>
        <PanelBody>
          <Stack>{["selSave", "selLoad", "selEdit"].map((i) => <SmallCommand key={i}><Icon name={i} size={17} /></SmallCommand>)}</Stack>
        </PanelBody>
        <PanelTitle>Sélection</PanelTitle>
      </Panel>
      <Panel $w={99}>
        <PanelBody>
          <Stack>{["ids", "idPick", "warnings"].map((i) => <SmallCommand key={i}><Icon name={i} size={17} /></SmallCommand>)}</Stack>
        </PanelBody>
        <PanelTitle>Renseignements</PanelTitle>
      </Panel>
      <Panel $w={50}>
        <PanelBody>
          <Stack $middle>{["macros", "security"].map((i) => <SmallCommand key={i}><Icon name={i} size={17} /></SmallCommand>)}</Stack>
        </PanelBody>
        <PanelTitle>Macros</PanelTitle>
      </Panel>
      <Panel>
        <PanelBody $justify="flex-start" $pad={18}>
          <BigCommand $w={50}><BigIcon name="dynamo" />Dynamo</BigCommand>
          <BigCommand $w={50}><BigIcon name="player" />Lecteur<span>Dynamo</span></BigCommand>
        </PanelBody>
        <PanelTitle $start>Programmation visuelle</PanelTitle>
      </Panel>
    </RibbonBar>
    <OptionsBar />
  </>
);

const PropertyValue = ({ row, id }) => {
  if (row.kind === "input") return <ScaleInput id={id} defaultValue={row.value} />;
  if (row.kind === "button") return <ValueButton id={id}>{row.value}</ValueButton>;
  if (row.kind === "check") return <Check id={id} type="checkbox" />;
  return row.value;
};

const PropertiesPanel = () => (
  <Properties>
    <PaneTitle>Propriétés</PaneTitle>
    <TypeSelector>
      <Preview>
        <svg width="32" height="32" viewBox="0 0 32 32" fill="none" stroke="#2d3340" strokeWidth="1.500">
          <linearGradient id="slab" x2="0" y2="1"><stop offset="0" stopColor="#c6cad2" /><stop offset="1" stopColor="#fff" /></linearGradient>
          <path d="M1 1h19v2h9v10h2v18H12v-2H1z" fill="url(#slab)" />
          <path d="M20 3v9M12 29V12h18" strokeDasharray="2 1.500" />
        </svg>
      </Preview>
      <span>Plan d'étage</span>
      <Icon name="caret" size={11} />
    </TypeSelector>
    <InstanceRow>
      <Combo $w={284} $h={23} $wide $line="#adadad" $fill="#dfdfdf">
        <select defaultValue="n0"><option value="n0">Plan d'étage: Niveau 0</option></select>
        <Icon name="down" size={12} />
      </Combo>
      <FlatButton><Icon name="typeEdit" size={17} />Modifier le type</FlatButton>
    </InstanceRow>
    <PropTable>
      <colgroup><col width="196" /><col width="194" /><col /></colgroup>
      {propertyGroups.map((g, gi) => (
        <tbody key={g.title}>
          <tr><GroupHead colSpan={3}><div>{g.title}<Icon name="chevrons" /></div></GroupHead></tr>
          {g.rows.map((row, i) => {
            const id = `prop-${gi}-${i}`;
            return (
              <tr key={row.name}>
                <NameCell $off={row.off}>{row.kind ? <label htmlFor={id}>{row.name}</label> : row.name}</NameCell>
                <ValueCell $off={row.off} $plain={!row.kind}><PropertyValue row={row} id={id} /></ValueCell>
                <ValueCell />
              </tr>
            );
          })}
        </tbody>
      ))}
    </PropTable>
  </Properties>
);

// walls, the door and the window, in sheet coordinates
const FloorPlan = () => (
  <svg shapeRendering="crispEdges">
    <g transform="translate(-406 -193)">
      <path d="M571.500 195V328.500H408V357.500H571.500V1000.500H1622V971.500H600.500V195z" fill="#00f" />
      <path d="M571.500 195V328.500H408M408 357.500H571.500V1000.500H1622M1622 971.500H600.500V195" fill="none" stroke="#a8103c" />
      <path d="M1169.500 195V255.500H943.500M943.500 284.500H1169.500V971M1199.500 971V195" fill="none" stroke="#000" />
      <path d="M1170 195h29v776h-29z" fill="#0ff" />
      <path d="M600.500 255.500H833.500V278H831.500V284.500H600.500z" fill="#0ff" stroke="#000" />
      <path d="M826.500 256v28" stroke="#000" />
      <path d="M1170 255.500H936.500V278H938.500V284.500H1170z" fill="#0ff" />
      <path d="M1169 255.500H936.500V278H938.500V284.500H1169M943.500 256v28" fill="none" stroke="#000" />
      <path d="M938.500 284V380M832 285l1.500 12 3.500 21 15 29 24 24 16 9" fill="none" stroke="#000" />
      <path d="M1345.500 969.500h87v31h-87z" fill="#f00" stroke="#000" />
      <path d="M1346 970h86v2h-86z" fill="#4fd8d0" />
      <path d="M1345 971.500h88M1352 998.500h74M1345 986v8M1433 986v8" stroke="#000" />
      <path d="M1352 997h74" stroke="#bfe8e8" />
      <path d="M1337.500 993.500h8v7h-8zM1345.500 994.500h7v6h-7zM1425.500 994.500h7v6h-7zM1432.500 993.500h8v7h-8z" fill="#0ff" stroke="#000" />
    </g>
  </svg>
);

const PhaseDialog = () => (
  <PhaseWindow role="dialog">
    <DialogTitle $idle>Phase de construction<button><Icon name="close" size={14} /></button></DialogTitle>
    <DialogTabs>
      <DialogTab>Phases du projet</DialogTab>
      <DialogTab $joined>Filtres des phases</DialogTab>
      <DialogTab $active>Remplacements de graphisme</DialogTab>
    </DialogTabs>
    <TabPane>
      <GridBox>
        <PhaseTable>
          <colgroup>
            <col width="181" /><col width="117" /><col width="117" /><col width="118" /><col width="118" />
            <col width="106" /><col width="181" /><col />
          </colgroup>
          <thead>
            <tr>
              <th rowSpan={2}>Etat de la phase</th>
              <th colSpan={2}>Projection/Surface</th>
              <th colSpan={2}>Coupe</th>
              <th rowSpan={2}>Demi-teinte</th>
              <th rowSpan={2}>Matériau</th>
              <th rowSpan={2} />
            </tr>
            <tr><th>Lignes</th><th>Motifs</th><th>Lignes</th><th>Motifs</th></tr>
          </thead>
          <tbody>
            {phases.map(([name, material], i) => {
              const selected = i === 3;
              return (
                <PhaseRow key={name} $selected={selected}>
                  <td><label htmlFor={`half-${i}`}>{name}</label></td>
                  <td /><td /><td /><td />
                  <td><Check id={`half-${i}`} type="checkbox" $size={selected ? 13 : 11} $line={selected ? "#1b3a5c" : "#7a7a7a"} $margin="0 auto" /></td>
                  <td>{material}</td>
                  <td />
                </PhaseRow>
              );
            })}
          </tbody>
        </PhaseTable>
      </GridBox>
    </TabPane>
    <DialogFooter>
      {["OK", "Annuler", "Appliquer", "Aide"].map((b) => <PushButton key={b}>{b}</PushButton>)}
    </DialogFooter>
    <Grip width="9" height="9" viewBox="0 0 9 9" fill="#b5b5b5" aria-hidden="true">
      <path d="M6 0h2v2H6zM3 3h2v2H3zM6 3h2v2H6zM0 6h2v2H0zM3 6h2v2H3zM6 6h2v2H6z" />
    </Grip>
  </PhaseWindow>
);

const Grip = styled.svg`
  position: absolute;
  right: 1px;
  bottom: 1px;
`;

const Spectrum = () => (
  <svg width="176" height="188" shapeRendering="crispEdges">
    {Array.from({ length: 44 }, (_, i) => (
      <rect key={i} x={i * 4} width="4" height="188" fill={`hsl(${(i * 360) / 43}, 100%, 50%)`} />
    ))}
    {Array.from({ length: 47 }, (_, i) => (
      <rect key={i} y={i * 4} width="176" height="4" fill="#808080" fillOpacity={i / 46} />
    ))}
    <path d="M0 .5H176" stroke="#a0a0a0" />
    <path d="M50 0h5v2h-5zM64 0h5v2h-5zM58 6h3v5h-3z" fill="#000" />
  </svg>
);

const LumBar = () => (
  <svg width="11" height="188" shapeRendering="crispEdges">
    {Array.from({ length: 32 }, (_, i) => (
      <rect key={i} y={i * 6} width="11" height={i === 31 ? 2 : 6} fill={`hsl(120, 100%, ${100 - (i * 100) / 31}%)`} />
    ))}
    <path d="M13 94l7-7v14z" fill="#000" />
  </svg>
);

const ColorDialog = () => {
  const green = useRef(null);

  useEffect(() => {
    green.current.focus();
    green.current.select();
  }, []);

  return (
    <ColorWindow role="dialog">
      <DialogTitle>Couleur<button><Icon name="close" size={14} /></button></DialogTitle>
      <ColorBody>
        <ColorColumn>
          <Caption $h={24}>Couleurs de base:</Caption>
          <SwatchGrid $after={13}>
            {baseColors.map((c, i) => <Swatch key={i} $color={c} $picked={i === 9} />)}
          </SwatchGrid>
          <Caption $h={21}>Couleurs personnalisées:</Caption>
          <SwatchGrid $after={9}>
            {customColors.map((c, i) => <Swatch key={i} $color={c} />)}
          </SwatchGrid>
          <Caption>Nom:</Caption>
          <Caption>Vert</Caption>
          <Comparison>
            <Sample $color="#ffff00"><Caption>Origine</Caption></Sample>
            <Sample $color="#00ff00"><Caption>Nouveau</Caption></Sample>
          </Comparison>
        </ColorColumn>
        <RightColumn>
          <Pickers><Spectrum /><LumBar /></Pickers>
          <Fields>
            <FieldLabel htmlFor="hue">Teinte:</FieldLabel><NumberBox id="hue" defaultValue="80" />
            <FieldLabel htmlFor="red" $w={78}>Rouge:</FieldLabel><NumberBox id="red" defaultValue="0" $line="#2a7ac0" />
            <FieldLabel htmlFor="sat">Sat:</FieldLabel><NumberBox id="sat" defaultValue="240" />
            <FieldLabel htmlFor="green" $w={78}>Vert:</FieldLabel><NumberBox id="green" ref={green} defaultValue="255" $line="#0a2a4c" />
            <FieldLabel htmlFor="lum">Lum:</FieldLabel><NumberBox id="lum" defaultValue="120" />
            <FieldLabel htmlFor="blue" $w={78}>Bleu:</FieldLabel><NumberBox id="blue" defaultValue="0" />
          </Fields>
          <ButtonLine>
            <PushButton>Ajouter</PushButton>
            <PushButton>PANTONE...</PushButton>
          </ButtonLine>
          <ButtonLine $bottom>
            <PushButton $w={118}>Pas de remplacement</PushButton>
            <PushButton $primary>OK</PushButton>
            <PushButton>Annuler</PushButton>
          </ButtonLine>
        </RightColumn>
      </ColorBody>
      <IBeam width="9" height="17" viewBox="0 0 9 17" fill="none" stroke="#000" shapeRendering="crispEdges">
        <path d="M1 .5h3M5 .5h3M4.500 1v15M1 16.500h3M5 16.500h3" />
      </IBeam>
    </ColorWindow>
  );
};

const TreeGuide = ({ type }) => {
  const box = type[0] === "+" || type[0] === "-";
  const top = type.endsWith("first") ? 9 : 0;
  const bottom = type === "l" || type.endsWith("last") ? 9 : 18;
  return (
    <svg width="20" height="18" shapeRendering="crispEdges">
      <path d={`M10.500 ${top}V${bottom}`} stroke="#999" strokeDasharray="1 1" />
      {type !== "v" && <path d="M11 10.500h14" stroke="#999" strokeDasharray="1 1" />}
      {box && <rect x="6.500" y="6.500" width="8" height="8" fill="#f4f4f4" stroke="#8c8c8c" />}
      {box && <path d={type[0] === "+" ? "M8 10.500h5M10.500 8v5" : "M8 10.500h5"} stroke="#2c3c8c" />}
    </svg>
  );
};

const ProjectBrowser = () => (
  <Browser>
    <PaneTitle $pad={4}>Arborescence du projet - Projet1</PaneTitle>
    <Tree>
      {treeRows.map((row) => (
        <TreeRow key={row.label}>
          {row.guides.map((g, i) => <TreeGuide key={i} type={g} />)}
          {row.icon && <Icon name={row.icon} size={18} />}
          <TreeLabel href="#" $root={row.icon} $current={row.current}>{row.label}</TreeLabel>
        </TreeRow>
      ))}
    </Tree>
  </Browser>
);

const App = () => (
  <Shell>
    <GlobalStyle />
    <Header />
    <Ribbon />
    <Workspace>
      <PropertiesPanel />
      <ViewArea>
        <ViewTabs>
          <TabGroup>
            <ViewTab $active><Icon name="plan" size={17} /><b>Niveau 0</b><Icon name="closeTab" size={12} /></ViewTab>
            <ViewTab><Icon name="house" size={17} /><b>{"{3D}"}</b></ViewTab>
          </TabGroup>
          <Icon name="custom" />
        </ViewTabs>
        <ViewBody>
          <Canvas>
            <FloorPlan />
            <NavBar>
              <NavEnd><Icon name="cross" size={9} /></NavEnd>
              <NavItem $h={46} $line><WheelMark><Icon name="wheel" size={22} /><b>2D</b></WheelMark><Icon name="caret" size={8} /></NavItem>
              <NavItem $h={44}><Icon name="zoomRegion" /><Icon name="caret" size={8} /></NavItem>
              <NavEnd><Icon name="minus" size={9} /></NavEnd>
            </NavBar>
            <PhaseDialog />
            <ColorDialog />
          </Canvas>
          <ScrollTrack><Icon name="up" size={12} /><ScrollSpace /><ScrollThumb /></ScrollTrack>
        </ViewBody>
      </ViewArea>
      <ProjectBrowser />
    </Workspace>
  </Shell>
);

export default App;
